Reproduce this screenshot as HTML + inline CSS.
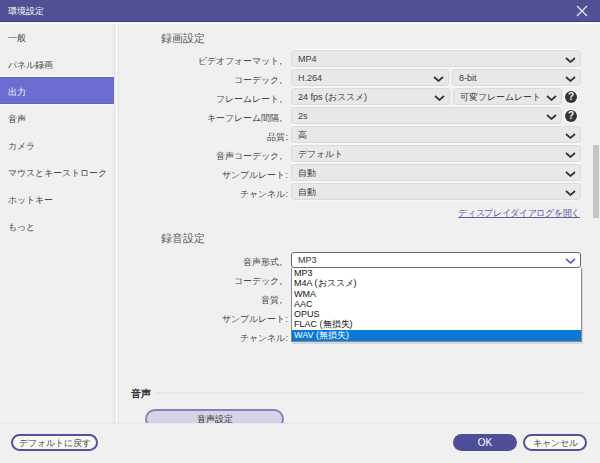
<!DOCTYPE html>
<html lang="ja">
<head>
<meta charset="utf-8">
<style>
*{box-sizing:border-box;margin:0;padding:0}
html,body{width:600px;height:463px;overflow:hidden;background:#f0f0f0}
body{position:relative;font-family:"Liberation Sans",sans-serif;font-size:9px;color:#3a3a3a}
.a{position:absolute}
#title{left:0;top:0;width:600px;height:22px;background:#4e5295}
#title .t1{left:0;top:19px;width:600px;height:2px;background:#4b51a3}
#title .t2{left:0;top:21px;width:600px;height:1px;background:#3b3e7c}
#title .tx{left:8px;top:4px;color:#fff;font-size:9px;line-height:14px}
#wline{left:0;top:22px;width:600px;height:2px;background:#fbfbfb}
#side{left:0;top:24px;width:114px;height:399px;background:#f0f0f0}
.vl{top:24px;height:399px;width:1px}
.si{left:0;width:114px;height:27px;line-height:29px;padding-left:8px;color:#474747;font-size:9px}
.si.sel{background:#6b6ed0;color:#fff;line-height:29px;border-top:1px solid #6063c8;border-bottom:1px solid #6063c8;box-shadow:0 -2px 0 #f8f8f6,0 1px 0 #f8f8f8}
.sec{left:161px;font-size:11px;color:#585858;line-height:13px}
.lb{right:312px;font-size:9px;line-height:20px;color:#484848;text-align:right;white-space:nowrap}
.lb.c{right:318px}
.dd{margin-top:-1px;height:17px;background:#e8e8e8;border:1px solid #dbdbdb;box-shadow:0 -1px 0 #f7f7f7,0 1px 0 #f7f7f7;border-radius:3px;line-height:16px;padding-left:6px;color:#3c3c3c;font-size:9px;white-space:nowrap}
.dd svg{position:absolute;right:4.5px;top:5.5px}
.help{width:12px;height:12px;border-radius:6px;background:#363636;box-shadow:0 0 0 1.5px #f8f8f8;color:#f4f4f4;font-weight:bold;font-size:10px;line-height:12.5px;text-align:center}
.btn{border-radius:9px;text-align:center;font-size:9px;white-space:nowrap}
</style>
</head>
<body>
<div id="title" class="a">
  <div class="a t1"></div><div class="a t2"></div>
  <div class="a tx">環境設定</div>
  <svg class="a" style="left:576px;top:4.5px" width="12" height="12" viewBox="0 0 12 12"><path d="M1 1L11 11M11 1L1 11" stroke="#e6e6f4" stroke-width="1.25" fill="none"/></svg>
</div>
<div id="wline" class="a"></div>

<!-- sidebar -->
<div id="side" class="a"></div>
<div class="a vl" style="left:112px;background:#ebebeb"></div>
<div class="a vl" style="left:114px;background:#e4e4e4"></div>
<div class="a vl" style="left:116px;background:#f6f6f6"></div>
<div class="a vl" style="left:118px;background:#e8e8e8"></div>

<div class="a si" style="top:24px">一般</div>
<div class="a si" style="top:51px">パネル録画</div>
<div class="a si sel" style="top:77px;height:27px">出力</div>
<div class="a si" style="top:105px">音声</div>
<div class="a si" style="top:132px">カメラ</div>
<div class="a si" style="top:159px">マウスとキーストローク</div>
<div class="a si" style="top:186px">ホットキー</div>
<div class="a si" style="top:213px">もっと</div>

<!-- content: recording -->
<div class="a sec" style="top:32px">録画設定</div>

<div class="a lb c" style="top:51px">ビデオフォーマット,</div>
<div class="a dd" style="left:291px;top:51px;width:290px">MP4<svg width="11" height="6" viewBox="0 0 11 6"><path d="M1 1L5.5 5L10 1" stroke="#333" stroke-width="1.7" fill="none"/></svg></div>

<div class="a lb c" style="top:70px">コーデック,</div>
<div class="a dd" style="left:291px;top:70px;width:158px">H.264<svg width="11" height="6" viewBox="0 0 11 6"><path d="M1 1L5.5 5L10 1" stroke="#333" stroke-width="1.7" fill="none"/></svg></div>
<div class="a dd" style="left:452px;top:70px;width:129px">8-bit<svg width="11" height="6" viewBox="0 0 11 6"><path d="M1 1L5.5 5L10 1" stroke="#333" stroke-width="1.7" fill="none"/></svg></div>

<div class="a lb c" style="top:89px">フレームレート,</div>
<div class="a dd" style="left:291px;top:89px;width:159px">24 fps (おススメ)<svg width="11" height="6" viewBox="0 0 11 6"><path d="M1 1L5.5 5L10 1" stroke="#333" stroke-width="1.7" fill="none"/></svg></div>
<div class="a dd" style="left:453px;top:89px;width:109px">可変フレームレート<svg width="11" height="6" viewBox="0 0 11 6"><path d="M1 1L5.5 5L10 1" stroke="#333" stroke-width="1.7" fill="none"/></svg></div>
<div class="a help" style="left:565px;top:91px">?</div>

<div class="a lb c" style="top:108px">キーフレーム間隔,</div>
<div class="a dd" style="left:291px;top:108px;width:271px">2s<svg width="11" height="6" viewBox="0 0 11 6"><path d="M1 1L5.5 5L10 1" stroke="#333" stroke-width="1.7" fill="none"/></svg></div>
<div class="a help" style="left:565px;top:110px">?</div>

<div class="a lb" style="top:127px">品質:</div>
<div class="a dd" style="left:291px;top:127px;width:290px">高<svg width="11" height="6" viewBox="0 0 11 6"><path d="M1 1L5.5 5L10 1" stroke="#333" stroke-width="1.7" fill="none"/></svg></div>

<div class="a lb c" style="top:146px">音声コーデック,</div>
<div class="a dd" style="left:291px;top:146px;width:290px">デフォルト<svg width="11" height="6" viewBox="0 0 11 6"><path d="M1 1L5.5 5L10 1" stroke="#333" stroke-width="1.7" fill="none"/></svg></div>

<div class="a lb" style="top:165px">サンプルレート:</div>
<div class="a dd" style="left:291px;top:165px;width:290px">自動<svg width="11" height="6" viewBox="0 0 11 6"><path d="M1 1L5.5 5L10 1" stroke="#333" stroke-width="1.7" fill="none"/></svg></div>

<div class="a lb" style="top:184px">チャンネル:</div>
<div class="a dd" style="left:291px;top:184px;width:290px">自動<svg width="11" height="6" viewBox="0 0 11 6"><path d="M1 1L5.5 5L10 1" stroke="#333" stroke-width="1.7" fill="none"/></svg></div>

<div class="a" style="right:20px;top:207px;font-size:9px;line-height:12px;color:#5c5ca2;letter-spacing:-0.3px;text-decoration:underline">ディスプレイダイアログを開く</div>

<!-- audio recording -->
<div class="a sec" style="top:232px">録音設定</div>

<div class="a lb c" style="top:252px">音声形式,</div>
<div class="a lb c" style="top:271px">コーデック,</div>
<div class="a lb c" style="top:290px">音質,</div>
<div class="a lb" style="top:309px">サンプルレート:</div>
<div class="a lb" style="top:328px">チャンネル:</div>

<div class="a" style="left:291px;top:252px;width:290px;height:16px;background:#fff;border:1px solid #6a6a6a;border-radius:3px;line-height:14px;padding-left:6px;color:#333;font-size:9px">MP3<svg class="a" style="right:4px;top:5px" width="11" height="6" viewBox="0 0 11 6"><path d="M1 0.8L5.5 5L10 0.8" stroke="#5a5ab8" stroke-width="1.6" fill="none"/></svg></div>
<div class="a" style="left:292px;top:269px;width:291px;height:75px;background:rgba(0,0,0,0.10);border-radius:1px"></div>
<div class="a" style="left:291px;top:268px;width:291px;height:74px;background:#fff;border-left:1px solid #8a8a8a;border-right:1px solid #8c8c8c;border-bottom:1px solid #8c8c8c;padding-top:0px;font-size:9px;color:#111;line-height:10.3px">
  <div style="padding-left:2px">MP3</div>
  <div style="padding-left:2px">M4A (おススメ)</div>
  <div style="padding-left:2px">WMA</div>
  <div style="padding-left:2px">AAC</div>
  <div style="padding-left:2px">OPUS</div>
  <div style="padding-left:2px">FLAC (無損失)</div>
  <div style="padding-left:2px;background:#0a78d7;color:#fff;height:11.2px;line-height:11px">WAV (無損失)</div>
</div>

<!-- audio -->
<div class="a" style="left:131px;top:387px;font-size:10px;font-weight:bold;color:#333;line-height:13px">音声</div>
<div class="a" style="left:155px;top:392px;width:429px;height:2px;background:#e6e6e6"></div>
<div class="a" style="left:145px;top:409px;width:139px;height:20px;border:2px solid #8282b9;border-radius:10px;background:#d4d4e6;text-align:center;line-height:17px;color:#333;font-size:9px">音声設定</div>

<!-- scrollbar -->
<div class="a" style="left:593px;top:145px;width:6px;height:73px;background:#c6c6c6"></div>

<!-- footer -->
<div class="a" style="left:0;top:423px;width:600px;height:40px;background:#f0f0f0;border-top:1px solid #e8e8e8"></div>
<div class="a btn" style="left:11px;top:434px;width:87px;height:17px;border:2px solid #5252a0;background:#f7f7f7;line-height:14.5px;color:#444">デフォルトに戻す</div>
<div class="a btn" style="left:453px;top:434px;width:64px;height:17px;background:#4f4f99;line-height:18px;color:#fff;font-size:10px">OK</div>
<div class="a btn" style="left:523px;top:434px;width:64px;height:17px;border:2px solid #5252a0;background:#f8f8f8;line-height:14.5px;color:#444">キャンセル</div>
</body>
</html>
